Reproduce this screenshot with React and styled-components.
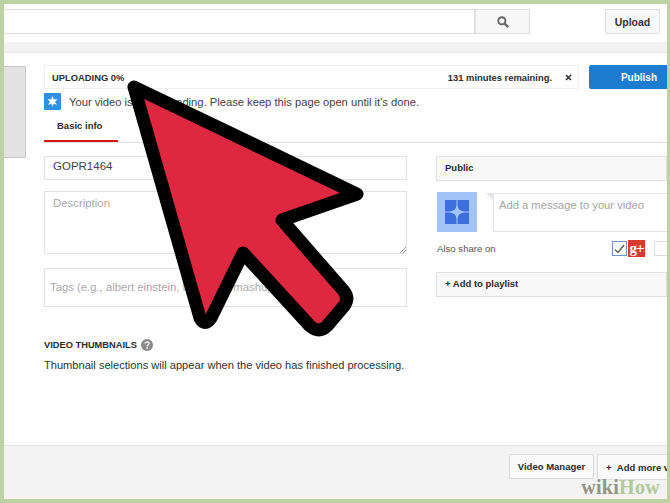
import React from 'react';
import styled, { createGlobalStyle } from 'styled-components';

const Global = createGlobalStyle`
  html, body { margin: 0; padding: 0; background: #fff; }
  * { box-sizing: border-box; }
`;

const Frame = styled.div`
  position: relative;
  width: 670px;
  height: 503px;
  overflow: hidden;
  display: flex;
  flex-direction: column;
  background: #fff;
  border-style: solid;
  border-color: #bdd2a3;
  border-width: 4px 3px 4px 4px;
  font-family: "Liberation Sans", Arial, sans-serif;
  color: #333;
`;

const TopBar = styled.div`
  display: flex;
  height: 38px;
  padding-top: 5px;
`;

const SearchInput = styled.div`
  width: 471px;
  height: 25px;
  border: 1px solid #dcdcdc;
  border-left: 0;
`;

const SearchButton = styled.div`
  width: 55px;
  height: 25px;
  display: flex;
  align-items: center;
  justify-content: center;
  background: #f7f7f7;
  border: 1px solid #dedede;
  border-left-color: #e4e4e4;
  color: #666;
`;

const UploadButton = styled.div`
  width: 55px;
  height: 25px;
  margin-left: 75px;
  display: flex;
  align-items: center;
  justify-content: center;
  background: #f8f8f8;
  border: 1px solid #dedede;
  border-radius: 2px;
  font-size: 10.5px;
  font-weight: bold;
`;

const Strip = styled.div`
  height: 11px;
  background: #f2f2f2;
  border-bottom: 1px solid #e6e6e6;
`;

const Body = styled.div`
  flex: 1;
  display: flex;
  gap: 18px;
  padding-top: 12px;
`;

const SideThumb = styled.div`
  width: 22px;
  height: 92px;
  margin-top: 1px;
  background: #e2e2e2;
  border: 1px solid #c9c9c9;
  border-left: 0;
`;

const Content = styled.div`
  flex: 1;
  min-width: 0;
`;

const UploadRow = styled.div`
  display: flex;
  gap: 10px;
`;

const UploadBar = styled.div`
  width: 535px;
  height: 24px;
  display: flex;
  align-items: center;
  padding: 0 6px 0 7px;
  border: 1px solid #eef0f2;
  font-size: 9.4px;
  font-weight: bold;
  color: #2c2c2c;
`;

const Remaining = styled.span`
  margin-left: auto;
  font-size: 9.4px;
`;

const CloseMark = styled.svg`
  margin-left: 13px;
`;

const PublishButton = styled.div`
  flex: 1;
  height: 24px;
  display: flex;
  align-items: center;
  justify-content: flex-end;
  padding-right: 10px;
  background: #1b7cd0;
  border-radius: 2px 0 0 2px;
  color: #fff;
  font-size: 10px;
  font-weight: bold;
`;

const Notice = styled.div`
  display: flex;
  align-items: center;
  gap: 8px;
  margin-top: 4px;
  height: 17px;
  font-size: 11.2px;
  color: #444;
`;

const Tabs = styled.div`
  height: 33px;
  border-bottom: 1px solid #e2e2e2;
`;

const Tab = styled.div`
  width: 74px;
  height: 32px;
  padding: 10px 0 0 13px;
  border-bottom: 2px solid #d7141a;
  font-size: 9.5px;
  font-weight: bold;
  color: #2c2c2c;
`;

const Columns = styled.div`
  display: flex;
  gap: 29px;
  padding-top: 13px;
`;

const LeftColumn = styled.div`
  width: 363px;
`;

const RightColumn = styled.div`
  flex: 1;
  min-width: 0;
`;

const Field = styled.div`
  position: relative;
  height: ${p => p.$h}px;
  margin-bottom: ${p => p.$mb}px;
  padding: ${p => p.$pad};
  border: 1px solid #e2e2e2;
  font-size: ${p => p.$size || 11.5}px;
  color: ${p => p.$color || '#aaa'};
`;

const Grip = styled.svg`
  position: absolute;
  right: 0;
  bottom: 0;
`;

const SectionTitle = styled.div`
  display: flex;
  align-items: center;
  gap: 4px;
  margin-top: 31px;
  height: 14px;
  font-size: 9.3px;
  font-weight: bold;
  color: #2c2c2c;
`;

const Hint = styled.div`
  margin-top: 7px;
  font-size: 11.1px;
  white-space: nowrap;
  color: #333;
`;

const SelectBar = styled.div`
  height: 25px;
  display: flex;
  align-items: center;
  padding: 0 0 2px 8px;
  background: #f8f8f8;
  border: 1px solid #e0e0e0;
  font-size: 9.5px;
  font-weight: bold;
  color: #2c2c2c;
`;

const ShareRow = styled.div`
  display: flex;
  margin-top: 11px;
`;

const Avatar = styled.div`
  width: 40px;
  height: 40px;
  margin-left: 1px;
  display: flex;
  align-items: center;
  justify-content: center;
  background: #a3c4f8;
`;

const MessageBox = styled.div`
  position: relative;
  flex: 1;
  height: 39px;
  margin: 1px 0 0 16px;
  padding: 5px;
  border: 1px solid #e4e4e4;
  border-right: 0;
  font-size: 11.2px;
  color: #a5a5a5;
  &::before {
    content: '';
    position: absolute;
    left: -8px;
    top: -1px;
    border-top: 8px solid #e4e4e4;
    border-left: 8px solid transparent;
  }
`;

const AlsoShare = styled.div`
  position: relative;
  height: 40px;
  display: flex;
  align-items: center;
  padding: 0 0 7px 1px;
  font-size: 9.6px;
  color: #555;
`;

const Networks = styled.div`
  margin: 0 -2px 0 auto;
  display: flex;
  align-items: center;
`;

const CheckBox = styled.div`
  width: 15px;
  height: 15px;
  display: flex;
  align-items: center;
  justify-content: center;
  border: 1px solid ${p => p.$on ? '#6f96bd' : '#dcdcdc'};
  margin-left: ${p => p.$gap || 0}px;
  background: #fff;
`;

const PlusBadge = styled.div`
  width: 17px;
  height: 17px;
  margin-left: 1px;
  display: flex;
  align-items: center;
  justify-content: center;
  background: #d93a2b;
  color: #fff;
  font-family: "Liberation Serif", serif;
  font-size: 15px;
  font-weight: bold;
  line-height: 1;
  letter-spacing: -1px;
`;

const Footer = styled.div`
  height: 54px;
  display: flex;
  padding: 8px 0 0 505px;
  gap: 3px;
  background: #f3f3f3;
  border-top: 1px solid #e4e4e4;
  overflow: hidden;
`;

const FooterButton = styled.div`
  flex: none;
  width: ${p => p.$w}px;
  height: ${p => p.$h}px;
  display: flex;
  align-items: center;
  justify-content: ${p => p.$left ? 'flex-start' : 'center'};
  padding-left: ${p => p.$left ? 8 : 0}px;
  background: #fafafa;
  border: 1px solid #dcdcdc;
  border-radius: 2px;
  font-size: 9.5px;
  font-weight: bold;
  color: #2c2c2c;
  white-space: nowrap;
`;

const Pointer = styled.svg`
  position: absolute;
  left: -4px;
  top: -4px;
  pointer-events: none;
`;

const Watermark = styled.div`
  position: absolute;
  right: 7px;
  bottom: 0;
  font-family: "Liberation Serif", serif;
  font-size: 20px;
  font-weight: bold;
  letter-spacing: 0.3px;
  color: #93938a;
`;

const WatermarkHow = styled.span`
  color: #b3c99c;
`;

const StarBadge = () => (
  <svg width="17" height="17" viewBox="0 0 17 17">
    <rect width="17" height="17" rx="1" fill="#2f8fe0" />
    <path d="M8.5 3l1.3 3.6 3.7-.6-2.5 2.7 2.1 3.1-3.5-1.1-1.1 3-1.1-3-3.5 1.1 2.1-3.1L3.5 6l3.7.6z" fill="#fff" />
  </svg>
);

const HelpIcon = () => (
  <svg width="12" height="12" viewBox="0 0 12 12">
    <circle cx="6" cy="6" r="6" fill="#8a8a8a" />
    <path d="M4.2 4.6c0-2.3 3.8-2.3 3.8-.1 0 1.4-1.9 1.4-1.9 2.8" fill="none" stroke="#fff" strokeWidth="1.4" />
    <rect x="5.3" y="8.2" width="1.6" height="1.6" fill="#fff" />
  </svg>
);

const App = () => (
  <>
    <Global />
    <Frame>
      <TopBar>
        <SearchInput />
        <SearchButton>
          <svg width="12" height="12" viewBox="0 0 11 11">
            <circle cx="4.4" cy="4.4" r="3.3" fill="none" stroke="currentColor" strokeWidth="1.7" />
            <path d="M6.8 6.8l3.4 3.4" stroke="currentColor" strokeWidth="2.2" />
          </svg>
        </SearchButton>
        <UploadButton>Upload</UploadButton>
      </TopBar>
      <Strip />
      <Body>
        <SideThumb />
        <Content>
          <UploadRow>
            <UploadBar>
              UPLOADING 0%
              <Remaining>131 minutes remaining.</Remaining>
              <CloseMark width="7" height="7" viewBox="0 0 7 7">
                <path d="M1 1l5 5M6 1l-5 5" stroke="#333" strokeWidth="1.6" />
              </CloseMark>
            </UploadBar>
            <PublishButton>Publish</PublishButton>
          </UploadRow>
          <Notice>
            <StarBadge />
            Your video is still uploading. Please keep this page open until it's done.
          </Notice>
          <Tabs>
            <Tab>Basic info</Tab>
          </Tabs>
          <Columns>
            <LeftColumn>
              <Field $h={24} $mb={11} $pad="3px 8px" $size={11.5} $color="#444">GOPR1464</Field>
              <Field $h={63} $mb={14} $pad="5px 8px" $size={11.4}>
                Description
                <Grip width="7" height="7" viewBox="0 0 7 7">
                  <path d="M1 7l6-6M4 7l3-3" stroke="#999" strokeWidth="1" />
                </Grip>
              </Field>
              <Field $h={39} $mb={0} $pad="12px 5px" $size={11.3}>
                Tags (e.g., albert einstein, flying pig, mashup)
              </Field>
              <SectionTitle>
                VIDEO THUMBNAILS
                <HelpIcon />
              </SectionTitle>
              <Hint>Thumbnail selections will appear when the video has finished processing.</Hint>
            </LeftColumn>
            <RightColumn>
              <SelectBar>Public</SelectBar>
              <ShareRow>
                <Avatar>
                  <svg width="24" height="24" viewBox="0 0 24 24">
                    <rect width="24" height="24" fill="#3d6fdc" />
                    <path d="M11.5 0h1v24h-1zM0 11.5h24v1H0z" fill="#a3c4f8" />
                    <path d="M12 5l2 4.6L19 12l-5 2.4L12 19l-2-4.6L5 12l5-2.4z" fill="#a3c4f8" />
                  </svg>
                </Avatar>
                <MessageBox>Add a message to your video</MessageBox>
              </ShareRow>
              <AlsoShare>
                Also share on
                <Networks>
                  <CheckBox $on>
                    <svg width="11" height="10" viewBox="0 0 11 10">
                      <path d="M1 5.5l3 3 6-7.5" fill="none" stroke="#555" strokeWidth="1.3" />
                    </svg>
                  </CheckBox>
                  <PlusBadge>g+</PlusBadge>
                  <CheckBox $gap={9} />
                </Networks>
              </AlsoShare>
              <SelectBar>+ Add to playlist</SelectBar>
            </RightColumn>
          </Columns>
        </Content>
      </Body>
      <Footer>
        <FooterButton $w={85} $h={25}>Video Manager</FooterButton>
        <FooterButton $w={90} $h={26} $left>+&nbsp;&nbsp;Add more videos</FooterButton>
      </Footer>
      <Watermark>wiki<WatermarkHow>How</WatermarkHow></Watermark>
      <Pointer width="670" height="503" viewBox="0 0 670 503">
        <path
          d="M134 87L357 194L282 220L343 290Q350 298 344 306L327 326Q319 334 310 326L243 253L211 318Q205 327 200 318Z"
          fill="#de2840"
          stroke="#000"
          strokeWidth="13"
          strokeLinejoin="round"
        />
      </Pointer>
    </Frame>
  </>
);

export default App;
